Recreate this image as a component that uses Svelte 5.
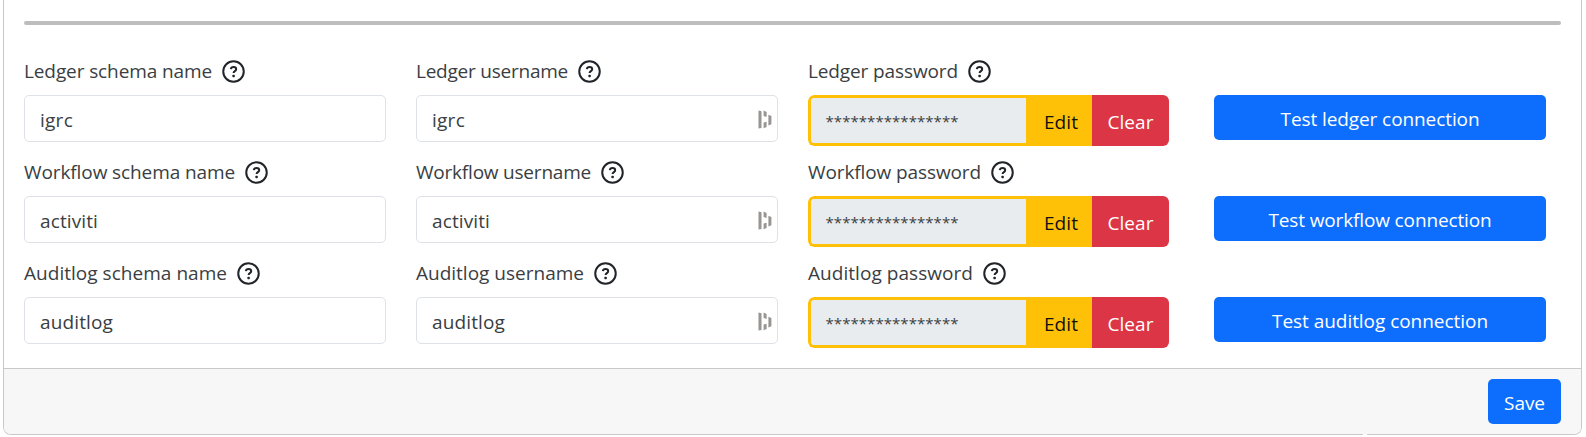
<script>
  const rows = [
    { name: 'Ledger', value: 'igrc', valueW: 33, labels: [188, 152, 150], test: 'Test ledger connection', testW: 199 },
    { name: 'Workflow', value: 'activiti', valueW: 58, labels: [211, 175, 173], test: 'Test workflow connection', testW: 223 },
    { name: 'Auditlog', value: 'auditlog', valueW: 73, labels: [203, 168, 165], test: 'Test auditlog connection', testW: 216 }
  ];

  // Tracks the letters of a text so that it takes the given width.
  function fit(node, width) {
    const natural = node.getBoundingClientRect().width;
    node.style.letterSpacing = `${(width - natural) / node.textContent.length}px`;
  }
</script>

{#snippet label(text, width)}
  <div class="label">
    <span class="text" use:fit={width}>{text}</span>
    <svg class="help" viewBox="0 0 24 24" aria-hidden="true">
      <circle cx="12" cy="12" r="10.7" />
      <path d="M9.2 9.6c.2-1.5 1.3-2.3 2.8-2.3 1.6 0 2.8.9 2.8 2.3 0 2-2.7 2-2.7 4" />
      <rect x="10.8" y="15.4" width="2.6" height="2.6" rx=".8" />
    </svg>
  </div>
{/snippet}

<main class="card">
  <section class="body">
    <div class="rule"></div>
    {#each rows as row}
      <div class="row">
        <div class="field">
          {@render label(`${row.name} schema name`, row.labels[0])}
          <div class="input"><span class="text" use:fit={row.valueW}>{row.value}</span></div>
        </div>
        <div class="field">
          {@render label(`${row.name} username`, row.labels[1])}
          <div class="input">
            <span class="text" use:fit={row.valueW}>{row.value}</span>
            <svg class="manager" viewBox="0 0 14 19" aria-hidden="true">
              <path d="M.5.6 3.5 1.2V18l-3 .6zM5.6.6 8.6 2v5L5.6 6zM10.4 4.8l3 1.2v8.2l-3 1.2zM5.6 12.6l3-.9V17l-3 1.3z" />
            </svg>
          </div>
        </div>
        <div class="field">
          {@render label(`${row.name} password`, row.labels[2])}
          <div class="group">
            <div class="secret"><span class="text" use:fit={133}>****************</span></div>
            <button class="edit"><span class="text" use:fit={34}>Edit</span></button>
            <button class="clear"><span class="text" use:fit={46}>Clear</span></button>
          </div>
        </div>
        <button class="primary test"><span class="text" use:fit={row.testW}>{row.test}</span></button>
      </div>
    {/each}
  </section>
  <footer>
    <button class="primary save"><span class="text" use:fit={41}>Save</span></button>
    <i class="notch"></i>
  </footer>
</main>

<style>
  :global(body) {
    background: #fff;
    overflow: hidden;
  }
  .card {
    box-sizing: border-box;
    width: 1579px;
    height: 435px;
    margin-left: 3px;
    border: 1px solid #c9c9c9;
    border-top: 0;
    border-radius: 0 0 8px 8px;
    display: flex;
    flex-direction: column;
    font: 19px/30px 'Open Sans', 'Noto Sans', sans-serif;
    color: #3a3e42;
  }
  .body {
    box-sizing: border-box;
    height: 368px;
    padding: 21px 20px 0;
  }
  .rule {
    height: 4px;
    border-radius: 2px;
    background: #bdbdbd;
    margin-bottom: 31px;
  }
  .row {
    height: 101px;
    display: grid;
    grid-template-columns: 362px 362px 361px 332px;
    column-gap: 30px;
    align-items: start;
  }
  .text {
    display: inline-block;
    white-space: pre;
  }
  .label {
    height: 39px;
    display: flex;
    align-items: flex-start;
    gap: 9.5px;
  }
  .help {
    width: 23px;
    height: 23px;
    margin-top: 4px;
    fill: none;
    stroke: #212529;
    stroke-width: 2.1;
  }
  .help rect {
    fill: #212529;
    stroke: none;
  }
  .input {
    box-sizing: border-box;
    height: 47px;
    border: 1px solid #dee2e6;
    border-radius: 5px;
    padding: 2px 5px 0 15px;
    display: flex;
    align-items: center;
    justify-content: space-between;
  }
  .manager {
    width: 14px;
    height: 19px;
    fill: #989492;
  }
  .group {
    display: flex;
    height: 51px;
    border-radius: 6px;
    overflow: hidden;
  }
  .secret {
    box-sizing: border-box;
    width: 218px;
    padding-left: 14.5px;
    border: 3px solid #ffc107;
    border-right: 0;
    border-radius: 6px 0 0 6px;
    background: #e9ecef;
    font-size: 15px;
    line-height: 46px;
  }
  button {
    border: 0;
    padding: 2px 0 0;
    margin: 0;
    font: inherit;
    display: flex;
    align-items: center;
    justify-content: center;
  }
  .edit {
    width: 66px;
    padding-left: 4px;
    background: #ffc107;
    color: #111;
  }
  .clear {
    width: 77px;
    background: #dc3545;
    color: #fff;
  }
  .primary {
    height: 45px;
    border-radius: 5px;
    background: #0d6efd;
    color: #fff;
  }
  .test {
    margin: 39px 0 0 15px;
    width: 332px;
  }
  footer {
    position: relative;
    box-sizing: border-box;
    flex: 1;
    border-top: 1px solid #c9c9c9;
    border-radius: 0 0 7px 7px;
    background: #f7f7f7;
    padding: 10px 20px 0;
    display: flex;
    justify-content: flex-end;
  }
  .save {
    width: 73px;
  }
  .notch {
    position: absolute;
    left: 1359px;
    bottom: -1px;
    width: 4px;
    height: 1px;
    background: #fff;
  }
</style>
